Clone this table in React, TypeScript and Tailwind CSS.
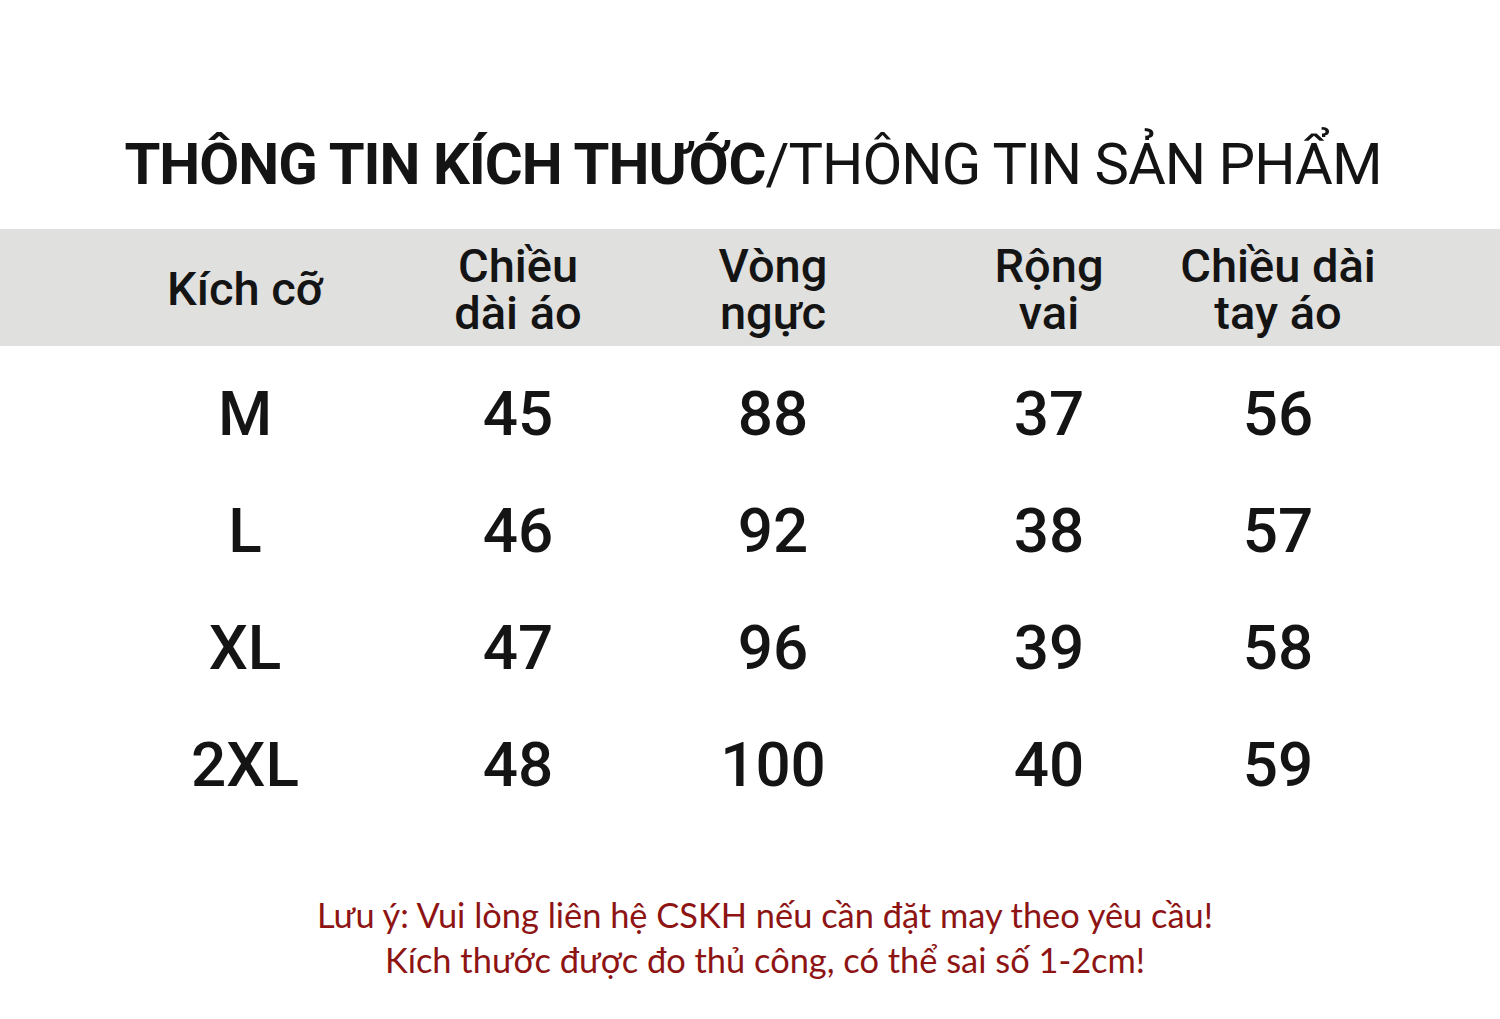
import React from "react";

const headers: string[][] = [
  ["Kích cỡ"],
  ["Chiều", "dài áo"],
  ["Vòng", "ngực"],
  ["Rộng", "vai"],
  ["Chiều dài", "tay áo"],
];

const rows: string[][] = [
  ["M", "45", "88", "37", "56"],
  ["L", "46", "92", "38", "57"],
  ["XL", "47", "96", "39", "58"],
  ["2XL", "48", "100", "40", "59"],
];

const gridCls =
  "ml-[90px] grid grid-cols-[310px_236px_274px_278px_180px]";

export default function App() {
  return (
    <div
      className="w-[1500px] h-[1019px] bg-white text-[#141414] overflow-hidden"
      style={{ fontFamily: "Roboto, 'Noto Sans', sans-serif" }}
    >
      <div className="pt-[128px] pl-[6px] h-[229px] flex justify-center">
        <h1 className="text-[58px] leading-[72px] whitespace-nowrap tracking-[-1px]">
          <span className="font-bold">THÔNG TIN KÍCH THƯỚC</span>
          <span className="font-normal">/THÔNG TIN SẢN PHẨM</span>
        </h1>
      </div>

      <div className="h-[117px] bg-[#e0e0df] flex items-center pt-[2px]">
        <div className={gridCls}>
          {headers.map((h, i) => (
            <div key={i} className="flex flex-col items-center justify-center">
              {h.map((l, j) => (
                <div
                  key={j}
                  className="text-[47px] leading-[47px] font-medium whitespace-nowrap"
                >
                  {l}
                </div>
              ))}
            </div>
          ))}
        </div>
      </div>

      <div className="pt-[9px]">
        {rows.map((r, i) => (
          <div key={i} className={gridCls + " h-[117px] items-center"}>
            {r.map((v, j) => (
              <div
                key={j}
                className="flex justify-center text-[62px] leading-[64px] font-medium whitespace-nowrap"
              >
                {v}
              </div>
            ))}
          </div>
        ))}
      </div>

      <div
        className="mt-[69px] pl-[30px] flex flex-col items-center text-[#8e1414] text-[34.4px] leading-[45px]"
        style={{ fontFamily: "Lato, 'Open Sans', sans-serif" }}
      >
        <div className="whitespace-nowrap">
          Lưu ý: Vui lòng liên hệ CSKH nếu cần đặt may theo yêu cầu!
        </div>
        <div className="whitespace-nowrap">
          Kích thước được đo thủ công, có thể sai số 1-2cm!
        </div>
      </div>
    </div>
  );
}
